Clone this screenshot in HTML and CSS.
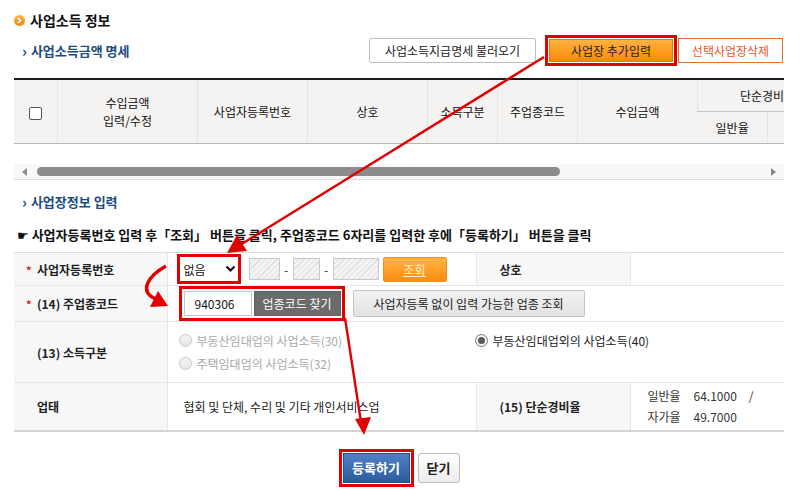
FILE: index.html
```html
<!DOCTYPE html>
<html>
  <head>
    <title>사업소득 정보</title>
    <link rel="stylesheet" href="styles.css">
  </head>
  <body>
    <div class="page">
      <h2 class="title"><span class="title-icon"><svg width="11" height="11" viewBox="0 0 11 11"><path d="M4 3 L6.5 5.5 L4 8" fill="none" stroke="#fff" stroke-width="1.6"/></svg></span>사업소득 정보</h2>

      <div class="sub-row">
        <h3 class="sub-title"><span class="chev">&rsaquo;</span>사업소득금액 명세</h3>
        <div class="top-btns">
          <button class="btn btn-white">사업소득지급명세 불러오기</button>
          <span class="mark mark-add"><button class="btn btn-orange">사업장 추가입력</button></span>
          <button class="btn btn-line">선택사업장삭제</button>
        </div>
      </div>

      <div class="grid-wrap">
        <table class="grid">
          <tr>
            <th rowspan="2" class="c-chk"><span class="chk"></span></th>
            <th rowspan="2" class="c-amt">수입금액<br>입력/수정</th>
            <th rowspan="2" class="c-reg">사업자등록번호</th>
            <th rowspan="2" class="c-name">상호</th>
            <th rowspan="2" class="c-kind">소득구분</th>
            <th rowspan="2" class="c-code">주업종코드</th>
            <th rowspan="2" class="c-sum">수입금액</th>
            <th colspan="2" class="c-rate">단순경비율</th>
          </tr>
          <tr>
            <th class="c-sub">일반율</th>
            <th class="c-sub">자가율</th>
          </tr>
        </table>
        <div class="grid-empty"></div>
        <div class="hscroll">
          <span class="arr arr-left"></span>
          <span class="thumb"></span>
          <span class="arr arr-right"></span>
        </div>
      </div>

      <h3 class="sub-title sub-gap"><span class="chev">&rsaquo;</span>사업장정보 입력</h3>
      <p class="guide"><span class="hand">&#9755;</span>사업자등록번호 입력 후「조회」 버튼을 클릭, 주업종코드 6자리를 입력한 후에「등록하기」 버튼을 클릭</p>

      <table class="form">
        <colgroup>
          <col class="col-label">
          <col class="col-value">
          <col class="col-label2">
          <col class="col-value2">
        </colgroup>
        <tr class="r1">
          <th><span class="req">*</span>사업자등록번호</th>
          <td>
            <div class="field-row">
              <span class="mark mark-sel"><span class="select">없음<svg width="11" height="8" viewBox="0 0 11 8"><path d="M1.5 1.5 L5.5 5.5 L9.5 1.5" fill="none" stroke="#111" stroke-width="2.2"/></svg></span></span>
              <span class="hatch w1"></span><span class="dash">-</span>
              <span class="hatch w2"></span><span class="dash">-</span>
              <span class="hatch w3"></span>
              <button class="btn btn-search">조회</button>
            </div>
          </td>
          <th class="th-right">상호</th>
          <td></td>
        </tr>
        <tr class="r2">
          <th><span class="req">*</span>(14) 주업종코드</th>
          <td colspan="3">
            <div class="field-row">
              <span class="mark mark-code"><span class="code-input">940306</span><button class="btn btn-dark">업종코드 찾기</button></span>
              <button class="btn btn-gray">사업자등록 없이 입력 가능한 업종 조회</button>
            </div>
          </td>
        </tr>
        <tr class="r3">
          <th class="no-req">(13) 소득구분</th>
          <td colspan="3">
            <div class="radios">
              <label class="radio off"><span class="dot"></span>부동산임대업의 사업소득(30)</label>
              <label class="radio on"><span class="dot"></span>부동산임대업외의 사업소득(40)</label>
              <label class="radio off"><span class="dot"></span>주택임대업의 사업소득(32)</label>
            </div>
          </td>
        </tr>
        <tr class="r4">
          <th class="no-req">업태</th>
          <td class="biz">협회 및 단체, 수리 및 기타 개인서비스업</td>
          <th class="th-right">(15) 단순경비율</th>
          <td class="rates">
            <div><span class="rate-name">일반율</span>64.1000<span class="slash">/</span></div>
            <div><span class="rate-name">자가율</span>49.7000</div>
          </td>
        </tr>
      </table>

      <div class="bottom-btns">
        <span class="mark mark-save"><button class="btn btn-blue">등록하기</button></span>
        <button class="btn btn-close">닫기</button>
      </div>
    </div>

    <svg class="notes" width="801" height="490" viewBox="0 0 801 490">
      <line x1="544" y1="57" x2="240" y2="245" stroke="#e00000" stroke-width="2.4"/>
      <polygon points="227,253 247,251 237,235" fill="#e00000"/>
      <path d="M166 266 C 148 276, 138 292, 156 299" fill="none" stroke="#e00000" stroke-width="3.5"/>
      <polygon points="168,306 150,307 158,291" fill="#e00000"/>
      <line x1="345" y1="318" x2="361" y2="422" stroke="#e00000" stroke-width="2.4"/>
      <polygon points="364,435 355,419 371,417" fill="#e00000"/>
    </svg>
  </body>
</html>
```

FILE: styles.css
```css
body{
  margin: 0;
  background-color: white;
  color: #333;
  font-family: "Noto Sans CJK KR", "Noto Sans", sans-serif;
  font-size: 12px;
}
.page{
  width: 770px;
  padding: 12px 0 0 14px;
}
.title{
  margin: 0;
  height: 16px;
  line-height: 16px;
  font-size: 14px;
  font-weight: bold;
  color: #111;
  display: flex;
  align-items: center;
}
.title-icon{
  width: 11px;
  height: 11px;
  border-radius: 50%;
  background: linear-gradient(#ffb24a, #f08a10);
  margin-right: 5px;
  display: flex;
}
.sub-row{
  margin-top: 7px;
  height: 31px;
  display: flex;
  align-items: center;
  justify-content: space-between;
}
.sub-title{
  margin: 0 0 0 8px;
  font-size: 13px;
  font-weight: bold;
  color: #1d4c82;
  line-height: 16px;
  display: flex;
  align-items: center;
}
.chev{
  font-size: 15px;
  font-weight: bold;
  margin-right: 4px;
  color: #1d4c82;
}
.sub-gap{
  margin-top: 14px;
}
.top-btns{
  display: flex;
  align-items: center;
  margin-right: 1px;
}
.btn{
  font-family: "Noto Sans CJK KR", sans-serif;
  font-size: 12px;
  padding: 0;
  cursor: pointer;
  box-sizing: border-box;
}
.btn-white{
  width: 167px;
  height: 25px;
  background: #fff;
  border: 1px solid #bdbdbd;
  border-radius: 2px;
  color: #222;
  margin-right: 9px;
}
.mark{
  border: 3px solid #e00000;
  padding: 1px;
  display: inline-flex;
  box-sizing: border-box;
}
.btn-orange{
  width: 124px;
  height: 23px;
  background: linear-gradient(#ffb140, #fb8a05);
  border: 1px solid #e47b00;
  color: #222;
}
.btn-line{
  width: 105px;
  height: 25px;
  background: #fff;
  border: 1px solid #e2742c;
  color: #e4572a;
  margin-left: 1px;
}
.grid-wrap{
  margin-top: 12px;
  width: 770px;
  overflow: hidden;
  border-bottom: 1px solid #dcdcdc;
}
.grid{
  border-collapse: collapse;
  table-layout: fixed;
  width: 823px;
  border-top: 2px solid #1a1a1a;
}
.grid th{
  background: #f4f3f1;
  font-weight: normal;
  color: #111;
  height: 31px;
  padding: 0;
  border-left: 1px solid #e6e5e3;
  border-bottom: 1px solid #b8b8b8;
  line-height: 18px;
}
.grid th:first-child{
  border-left: none;
}
.grid .c-rate{
  border-bottom: 1px solid #c8c8c8;
}
.c-chk{ width: 43px; }
.c-amt{ width: 139px; }
.c-reg{ width: 109px; }
.c-name{ width: 119px; }
.c-kind{ width: 69px; }
.c-code{ width: 79px; }
.c-sum{ width: 119px; }
.chk{
  display: inline-block;
  width: 11px;
  height: 11px;
  border: 1px solid #555;
  border-radius: 2px;
  background: #fff;
  vertical-align: middle;
}
.grid-empty{
  height: 20px;
}
.hscroll{
  height: 15px;
  background: #f8f8f8;
  display: flex;
  align-items: center;
}
.arr{
  width: 0;
  height: 0;
  border-top: 4px solid transparent;
  border-bottom: 4px solid transparent;
}
.arr-left{
  border-right: 5px solid #8a8a8a;
  margin-left: 8px;
}
.arr-right{
  border-left: 5px solid #8a8a8a;
  margin-left: auto;
  margin-right: 8px;
}
.thumb{
  width: 523px;
  height: 9px;
  background: #8c8c8c;
  border-radius: 5px;
  margin-left: 10px;
}
.guide{
  margin: 17px 0 0 3px;
  font-weight: bold;
  color: #111;
  line-height: 16px;
  font-size: 13px;
}
.hand{
  font-family: "DejaVu Sans", sans-serif;
  font-size: 13px;
  margin-right: 3px;
}
.form{
  margin-top: 8px;
  width: 770px;
  border-collapse: collapse;
  table-layout: fixed;
  border-top: 1px solid #dedede;
  border-bottom: 2px solid #d4d4d4;
}
.col-label{ width: 153px; }
.col-value{ width: 309px; }
.col-label2{ width: 154px; }
.col-value2{ width: 154px; }
.form th{
  background: #f7f7f7;
  text-align: left;
  padding: 0 0 0 12px;
  font-weight: bold;
  color: #222;
  border-bottom: 1px solid #e6e6e6;
  border-right: 1px solid #e6e6e6;
}
.form th.no-req{
  padding-left: 23px;
}
.form .th-right{
  padding-left: 23px;
  border-left: 1px solid #e6e6e6;
}
.form td{
  padding: 0 0 0 9px;
  border-bottom: 1px solid #e6e6e6;
}
.req{
  color: #d01818;
  margin-right: 5px;
  font-size: 11px;
  display: inline-block;
  width: 6px;
}
.r1{ height: 33px; }
.r2{ height: 33px; }
.r3{ height: 61px; }
.r4{ height: 48px; }
.field-row{
  display: flex;
  align-items: center;
}
.mark-sel{
  padding: 0;
}
.select{
  width: 58px;
  height: 24px;
  box-sizing: border-box;
  display: flex;
  align-items: center;
  justify-content: space-between;
  padding: 0 2px 0 4px;
  background: #fff;
  color: #111;
}
.hatch{
  height: 22px;
  box-sizing: border-box;
  border: 1px solid #c8c8c8;
  background: repeating-linear-gradient(135deg, #f3f3f3 0, #f3f3f3 3px, #dedede 3px, #dedede 4px);
}
.w1{ width: 31px; margin-left: 8px; }
.w2{ width: 27px; }
.w3{ width: 46px; }
.dash{
  width: 13px;
  text-align: center;
  color: #333;
}
.btn-search{
  width: 64px;
  height: 25px;
  margin-left: 4px;
  background: linear-gradient(#ffb44a, #fb8d0c);
  border: 1px solid #f0901e;
  border-radius: 2px;
  color: #fff3df;
  text-decoration: underline;
}
.mark-code{
  padding: 2px 1px 2px 2px;
  margin-left: 2px;
}
.code-input{
  width: 68px;
  height: 25px;
  box-sizing: border-box;
  border: 1px solid #c8c8c8;
  background: #fff;
  padding-left: 10px;
  line-height: 23px;
  color: #111;
}
.btn-dark{
  width: 87px;
  height: 25px;
  margin-left: 2px;
  background: #6b6b6b;
  border: 1px solid #5f5f5f;
  color: #fff;
}
.btn-gray{
  width: 232px;
  height: 27px;
  margin-left: 8px;
  background: linear-gradient(#f2f2f2, #e2e2e2);
  border: 1px solid #c4c4c4;
  border-radius: 2px;
  color: #222;
}
.radios{
  display: grid;
  grid-template-columns: 296px auto;
  row-gap: 6px;
}
.radio{
  display: flex;
  align-items: center;
  line-height: 17px;
}
.radio .dot{
  width: 11px;
  height: 11px;
  border-radius: 50%;
  border: 1px solid #c9c9c9;
  background: linear-gradient(#f4f4f4, #e6e6e6);
  margin-right: 5px;
  margin-left: 2px;
  position: relative;
}
.radio.off{
  color: #a8a8a8;
}
.radio.on{
  color: #222;
}
.radio.on .dot{
  border-color: #777;
  background: #f4f4f4;
}
.radio.on .dot::after{
  content: "";
  position: absolute;
  left: 2px;
  top: 2px;
  width: 7px;
  height: 7px;
  border-radius: 50%;
  background: #5a5a5a;
}
.biz{
  color: #222;
  padding-left: 16px !important;
}
.rates{
  color: #333;
  line-height: 21px;
  padding-left: 17px !important;
}
.rate-name{
  display: inline-block;
  width: 46px;
}
.slash{
  margin-left: 12px;
}
.bottom-btns{
  margin-top: 17px;
  display: flex;
  justify-content: center;
  align-items: center;
}
.btn-blue{
  width: 67px;
  height: 30px;
  background: linear-gradient(#4f81c2, #2d5c9c);
  border: 1px solid #24508c;
  color: #fff;
  font-size: 13px;
  font-weight: bold;
}
.btn-close{
  width: 42px;
  height: 30px;
  margin-left: 4px;
  background: linear-gradient(#ffffff, #ececec);
  border: 1px solid #bbb;
  border-radius: 3px;
  color: #222;
  font-size: 13px;
  font-weight: bold;
}
.notes{
  position: absolute;
  left: 0;
  top: 0;
  pointer-events: none;
}
```
